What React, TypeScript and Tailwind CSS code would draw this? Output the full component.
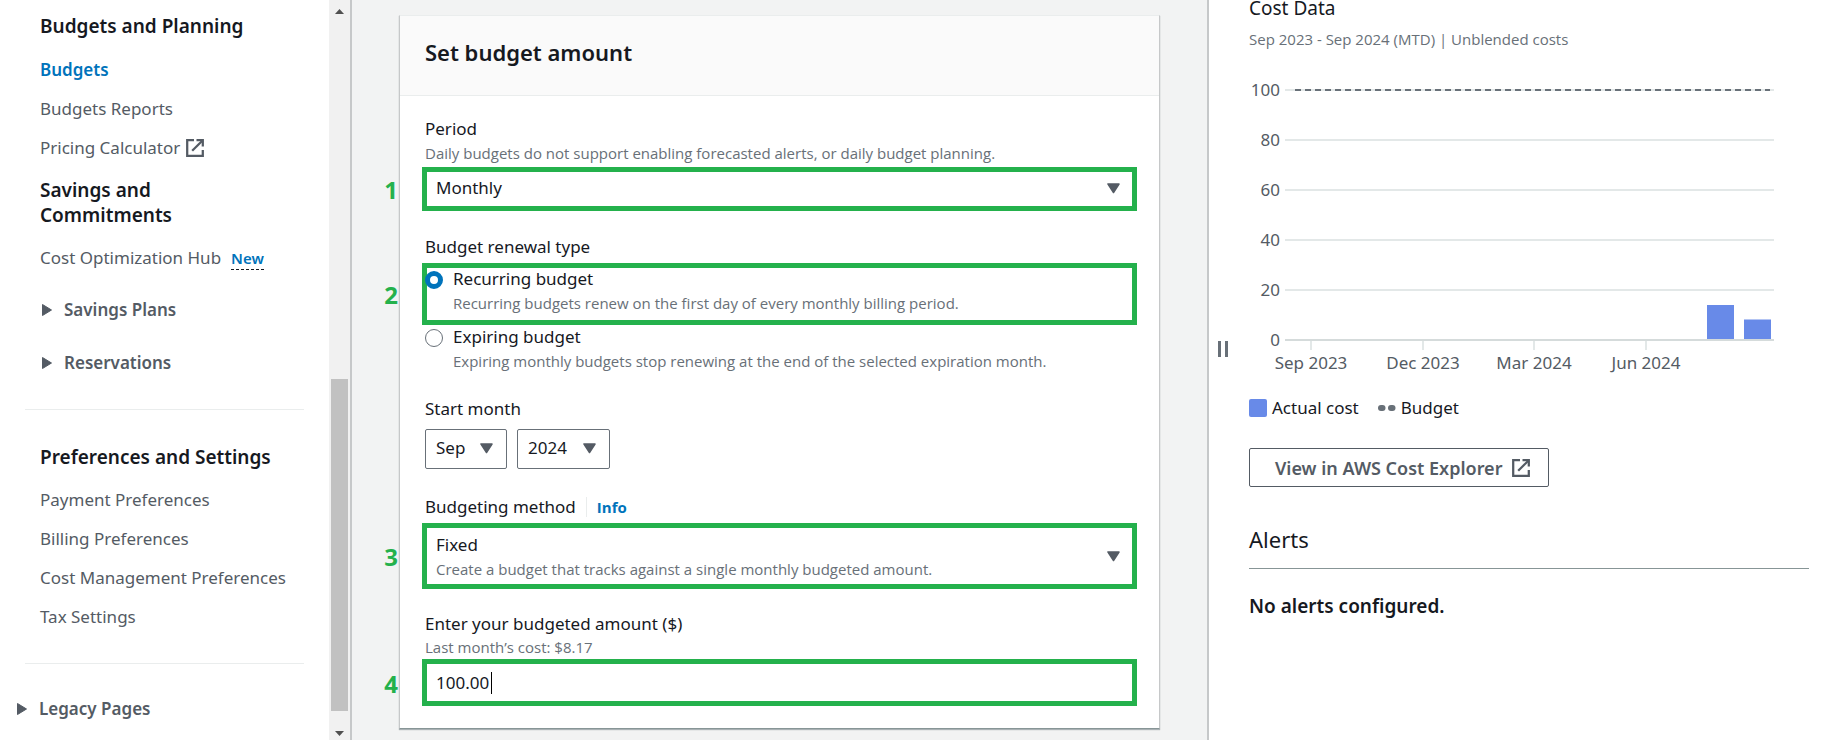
import type { ReactNode } from 'react';

const yTicks = [100, 80, 60, 40, 20, 0];
const xTicks = [
  { label: 'Sep 2023', x: 62 },
  { label: 'Dec 2023', x: 174 },
  { label: 'Mar 2024', x: 285 },
  { label: 'Jun 2024', x: 397 },
];
const bars = [
  { x: 458, value: 13.6 },
  { x: 495, value: 7.8 },
];

function ExternalIcon() {
  return (
    <svg viewBox="0 0 18 18" className="size-[18px] shrink-0" fill="none" stroke="#545b64" strokeWidth="2.250" aria-hidden="true">
      <path d="M8 1.200H1.200v15.600h15.600v-5.800" />
      <path d="M10.500 1.200H16.800v6.300" />
      <path d="M16.800 1.200 6.200 11.800" />
    </svg>
  );
}

function CaretRight() {
  return (
    <svg viewBox="0 0 10 12" className="h-3 w-2.5 shrink-0" aria-hidden="true">
      <path d="M.500 .500v11l9-5.500z" fill="#545b64" stroke="#545b64" strokeWidth="1" strokeLinejoin="round" />
    </svg>
  );
}

function CaretDown({ className }: { className: string }) {
  return (
    <svg viewBox="0 0 13 11" className={'pointer-events-none absolute h-[11px] w-[13px] ' + className} aria-hidden="true">
      <path d="M1 1h11L6.500 9.500z" fill="#545b64" stroke="#545b64" strokeWidth="1.500" strokeLinejoin="round" />
    </svg>
  );
}

function Hint({ id, className = '', children }: { id?: string; className?: string; children: ReactNode }) {
  return (
    <p id={id} className={"font-['Open_Sans','Noto_Sans',sans-serif] text-[15px] text-[#687078] " + className}>
      {children}
    </p>
  );
}

function NavLink({ children }: { children: ReactNode }) {
  return (
    <li>
      <a href="#" className="flex items-center gap-1.5 text-[#545b64]">
        {children}
      </a>
    </li>
  );
}

function NavHeading({ children }: { children: ReactNode }) {
  return <h2 className="text-[19px] leading-[25px] font-semibold text-[#16191f]">{children}</h2>;
}

function Section({ children }: { children: ReactNode }) {
  return (
    <button type="button" className="flex items-center gap-3 font-semibold text-[#545b64]">
      <CaretRight />
      {children}
    </button>
  );
}

function Step({ number, children }: { number: number; children: ReactNode }) {
  return (
    <div className="relative -mx-[3px] border-[5px] border-[#24b14c] bg-white">
      <span className="absolute inset-y-0 -left-[46px] flex w-5 items-center justify-center pt-0.5 font-['Open_Sans','Noto_Sans',sans-serif] text-2xl font-bold text-[#24b14c]">
        {number}
      </span>
      {children}
    </div>
  );
}

function Sidebar() {
  return (
    <aside className="flex w-[352px] shrink-0 border-r-2 border-[#c6c8c9] bg-white">
      <nav className="flex-1 px-[25px] pt-3.5">
        <div className="pl-[15px]">
          <NavHeading>Budgets and Planning</NavHeading>
          <ul className="flex flex-col gap-3.5 pt-[18px] pb-[18px]">
            <li>
              <a href="#" className="font-semibold text-[#0073bb]">Budgets</a>
            </li>
            <NavLink>Budgets Reports</NavLink>
            <NavLink>Pricing Calculator <ExternalIcon /></NavLink>
          </ul>
          <div className="w-40">
            <NavHeading>Savings and Commitments</NavHeading>
          </div>
          <div className="flex items-center gap-2.5 pt-[17px] pb-[27px] whitespace-nowrap text-[#545b64]">
            <a href="#">Cost Optimization Hub</a>
            <button type="button" className="mt-0.5 border-b border-dashed border-[#16191f] text-[15px] leading-[21px] font-semibold text-[#0073bb]">New</button>
          </div>
          <div className="flex flex-col gap-7 pb-[34px] pl-0.5">
            <Section>Savings Plans</Section>
            <Section>Reservations</Section>
          </div>
        </div>
        <hr className="border-[#eaeded]" />
        <div className="pt-[35px] pb-[34px] pl-[15px]">
          <NavHeading>Preferences and Settings</NavHeading>
          <ul className="flex flex-col gap-3.5 pt-[17px] whitespace-nowrap">
            <NavLink>Payment Preferences</NavLink>
            <NavLink>Billing Preferences</NavLink>
            <NavLink>Cost Management Preferences</NavLink>
            <NavLink>Tax Settings</NavLink>
          </ul>
        </div>
        <hr className="border-[#eaeded]" />
        <div className="-ml-2 pt-8">
          <Section>Legacy Pages</Section>
        </div>
      </nav>
      <div className="flex w-[21px] flex-col items-center bg-[#f1f1f1]" aria-hidden="true">
        <svg viewBox="0 0 9 5" className="mt-[9px] mb-2 h-[5px] w-[9px] shrink-0"><path d="M0 5h9L4.500 0z" fill="#505050" /></svg>
        <div className="grow-[357]" />
        <div className="w-[17px] grow-[332] bg-[#c1c1c1]" />
        <div className="grow-[7]" />
        <svg viewBox="0 0 9 5" className="mt-[13px] mb-1 h-[5px] w-[9px] shrink-0"><path d="M0 0h9L4.500 5z" fill="#505050" /></svg>
      </div>
    </aside>
  );
}

function BudgetForm() {
  return (
    <section className="border border-[#c6c8c9] border-t-[#eaeded] border-b-[#879596] bg-white shadow-[0_1px_1px_rgba(0,28,36,0.3)]">
      <header className="border-b border-[#eaeded] bg-[#fafafa] px-[25px] pt-[21px] pb-7">
        <h1 className="text-[22px] leading-[30px] font-semibold">Set budget amount</h1>
      </header>
      <form className="px-[25px] pt-5 pb-[22px]">
        <label htmlFor="period" className="block">Period</label>
        <Hint id="period-help" className="pb-px">
          Daily budgets do not support enabling forecasted alerts, or daily budget planning.
        </Hint>
        <Step number={1}>
          <select id="period" aria-describedby="period-help" className="block h-[34px] w-full appearance-none pr-8 pb-1 pl-[9px]">
            <option>Monthly</option>
          </select>
          <CaretDown className="top-[11px] right-3" />
        </Step>

        <fieldset className="pt-[23px]">
          <legend className="contents">Budget renewal type</legend>
          <div className="pt-1">
            <Step number={2}>
              <div className="flex h-[52px] gap-2.5">
                <input
                  id="recurring" type="radio" name="renewal" defaultChecked
                  className="mt-[3px] -ml-0.5 size-[18px] shrink-0 appearance-none rounded-full border border-[#687078] bg-white checked:border-[5px] checked:border-[#0073bb]"
                />
                <div className="-mt-0.5">
                  <label htmlFor="recurring" className="block">Recurring budget</label>
                  <Hint>Recurring budgets renew on the first day of every monthly billing period.</Hint>
                </div>
              </div>
            </Step>
          </div>
          <div className="-mt-px flex gap-2.5">
            <input
              id="expiring" type="radio" name="renewal"
              className="mt-[5px] size-[18px] shrink-0 appearance-none rounded-full border border-[#687078] bg-white checked:border-[5px] checked:border-[#0073bb]"
            />
            <div>
              <label htmlFor="expiring" className="block">Expiring budget</label>
              <Hint>Expiring monthly budgets stop renewing at the end of the selected expiration month.</Hint>
            </div>
          </div>
        </fieldset>

        <label htmlFor="month" className="block pt-[22px] pb-2">Start month</label>
        <div className="flex gap-2.5">
          <div className="relative">
            <select id="month" className="block h-10 w-[82px] appearance-none rounded-xs border border-[#687078] bg-white pb-1 pl-2.5">
              <option>Sep</option>
            </select>
            <CaretDown className="top-3.5 right-3.5" />
          </div>
          <div className="relative">
            <select aria-label="Start year" className="block h-10 w-[93px] appearance-none rounded-xs border border-[#687078] bg-white pb-1 pl-2.5">
              <option>2024</option>
            </select>
            <CaretDown className="top-3.5 right-3.5" />
          </div>
        </div>

        <div className="flex items-center gap-2.5 pt-[25px] pb-1">
          <label htmlFor="method">Budgeting method</label>
          <a href="#" className="border-l border-[#eaeded] pl-2.5 font-['Open_Sans','Noto_Sans',sans-serif] text-[15px] leading-5 font-bold text-[#0073bb]">Info</a>
        </div>
        <Step number={3}>
          <select id="method" aria-describedby="method-help" className="block h-14 w-full appearance-none pr-8 pb-6 pl-[9px]">
            <option>Fixed</option>
          </select>
          <Hint id="method-help" className="pointer-events-none absolute top-[29px] left-[9px]">
            Create a budget that tracks against a single monthly budgeted amount.
          </Hint>
          <CaretDown className="top-[23px] right-3" />
        </Step>

        <label htmlFor="amount" className="block pt-[22px]">Enter your budgeted amount ($)</label>
        <Hint id="amount-help" className="leading-[23px]">Last month’s cost: $8.17</Hint>
        <Step number={4}>
          <input id="amount" type="text" defaultValue="100.00" aria-describedby="amount-help" className="block h-[37px] w-full pl-[9px] outline-none" />
          <span className="absolute top-2 left-16 h-[22px] w-px bg-black" aria-hidden="true" />
        </Step>
      </form>
    </section>
  );
}

function CostChart() {
  return (
    <svg viewBox="0 0 526 304" className="h-[304px] w-[526px] text-[17px]" fill="#545b64" role="img" aria-label="Actual cost compared with budget">
      {yTicks.map((tick) => {
        const y = 270 - tick * 2.5;
        return (
          <g key={tick}>
            <text x="31" y={y + 6} textAnchor="end">{tick}</text>
            <path d={`M36 ${y}H525`} stroke={tick === 0 ? '#d5dbdb' : '#e3e8e8'} strokeWidth="2" />
          </g>
        );
      })}
      <path d="M46 20H521" stroke="#687078" strokeWidth="2" strokeDasharray="6 4" />
      {bars.map((bar) => (
        <rect key={bar.x} x={bar.x} y={269 - bar.value * 2.5} width="27" height={bar.value * 2.5} fill="#688ae8" />
      ))}
      {xTicks.map((tick) => (
        <g key={tick.label}>
          <path d={`M${tick.x} 271v9`} stroke="#e3e8e8" strokeWidth="2" />
          <text x={tick.x} y="299" textAnchor="middle">{tick.label}</text>
        </g>
      ))}
    </svg>
  );
}

function CostPanel() {
  return (
    <aside className="flex w-[638px] shrink-0 border-l-2 border-[#c6c8c9] bg-white pr-9">
      <button type="button" aria-label="Resize panel" className="mt-[341px] mr-[21px] ml-[9px] flex h-4 w-[10px] shrink-0 justify-between">
        <span className="h-4 w-[3px] bg-[#687078]" />
        <span className="h-4 w-[3px] bg-[#687078]" />
      </button>
      <div className="flex-1">
        <h2 className="-mt-2 text-[19px] leading-8">Cost Data</h2>
        <Hint className="pt-px pb-[17px] leading-[28px]">Sep 2023 - Sep 2024 (MTD) | Unblended costs</Hint>
        <CostChart />
        <div className="flex items-center gap-[5px] pt-[21px]">
          <span className="size-[18px] rounded-xs bg-[#688ae8]" />
          <span>Actual cost</span>
          <svg viewBox="0 0 18 6" className="ml-3.5 h-1.5 w-[18px]" fill="#687078" aria-hidden="true">
            <rect y="0" width="7.500" height="6" rx="3" />
            <rect x="10" y="0" width="7.500" height="6" rx="3" />
          </svg>
          <span>Budget</span>
        </div>
        <a href="#" className="mt-7 inline-flex h-[39px] items-center gap-2.5 rounded-xs border border-[#545b64] pr-[18px] pl-[25px] text-lg font-semibold text-[#545b64]">
          View in AWS Cost Explorer <ExternalIcon />
        </a>
        <h2 className="border-b border-[#879596] pt-[37px] pb-3.5 text-[22px] leading-[30px]">Alerts</h2>
        <p className="pt-[25px] text-[19px] font-semibold">No alerts configured.</p>
      </div>
    </aside>
  );
}

export default function App() {
  return (
    <div className="flex min-h-screen bg-[#f2f3f3] font-['Noto_Sans',sans-serif] text-[17px] leading-[25px] text-[#16191f]">
      <Sidebar />
      <main className="min-w-0 flex-1 px-[47px] pt-[15px] pb-[11px]">
        <BudgetForm />
      </main>
      <CostPanel />
    </div>
  );
}
